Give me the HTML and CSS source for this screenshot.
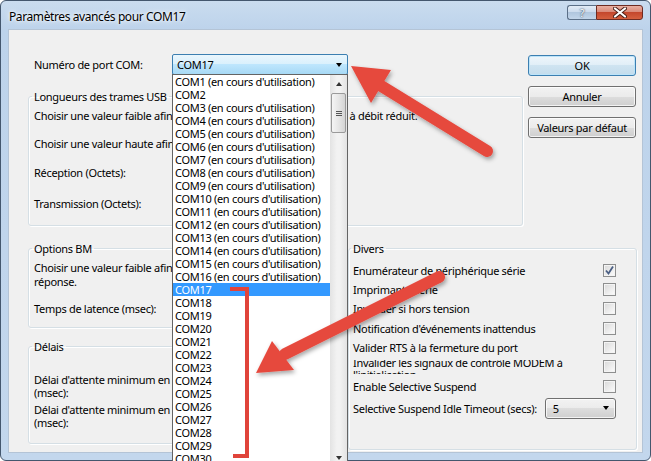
FILE: index.html
```html
<!DOCTYPE html>
<html>
<head>
<title>Paramètres avancés pour COM17</title>
<link rel="stylesheet" href="styles.css">
<meta name="viewport" content="width=device-width, initial-scale=1.0">
</head>
<body>
<div class="window">
  <div class="titlebar">
    <span class="title">Paramètres avancés pour COM17</span>
    <div class="caption">
      <span class="cap-help">?</span>
      <span class="cap-close">
        <svg width="14" height="11" viewBox="0 0 14 11"><path d="M2 1.5 L12 9.5 M12 1.5 L2 9.5" stroke="#4a1e17" stroke-width="4" stroke-linecap="round"/><path d="M2 1.5 L12 9.5 M12 1.5 L2 9.5" stroke="#fff" stroke-width="2.2" stroke-linecap="round"/></svg>
      </span>
    </div>
  </div>
  <div class="client">
    <div class="top">
      <div class="main">
        <div class="port-row">
          <span class="port-label">Numéro de port COM:</span>
          <div class="combo combo-port">
            <span>COM17</span>
            <span class="tri"></span>
            <div class="droplist">
              <div class="items">
                <div class="item">COM1 (en cours d'utilisation)</div>
                <div class="item">COM2</div>
                <div class="item">COM3 (en cours d'utilisation)</div>
                <div class="item">COM4 (en cours d'utilisation)</div>
                <div class="item">COM5 (en cours d'utilisation)</div>
                <div class="item">COM6 (en cours d'utilisation)</div>
                <div class="item">COM7 (en cours d'utilisation)</div>
                <div class="item">COM8 (en cours d'utilisation)</div>
                <div class="item">COM9 (en cours d'utilisation)</div>
                <div class="item">COM10 (en cours d'utilisation)</div>
                <div class="item">COM11 (en cours d'utilisation)</div>
                <div class="item">COM12 (en cours d'utilisation)</div>
                <div class="item">COM13 (en cours d'utilisation)</div>
                <div class="item">COM14 (en cours d'utilisation)</div>
                <div class="item">COM15 (en cours d'utilisation)</div>
                <div class="item">COM16 (en cours d'utilisation)</div>
                <div class="item selected">COM17</div>
                <div class="item">COM18</div>
                <div class="item">COM19</div>
                <div class="item">COM20</div>
                <div class="item">COM21</div>
                <div class="item">COM22</div>
                <div class="item">COM23</div>
                <div class="item">COM24</div>
                <div class="item">COM25</div>
                <div class="item">COM26</div>
                <div class="item">COM27</div>
                <div class="item">COM28</div>
                <div class="item">COM29</div>
                <div class="item">COM30</div>
                <div class="item">COM31</div>
              </div>
              <div class="vscroll">
                <div class="sb-btn"><span class="tri-up"></span></div>
                <div class="thumb"><span class="grip"></span></div>
                <div class="sb-track"></div>
                <div class="sb-btn"><span class="tri-down"></span></div>
              </div>
            </div>
          </div>
        </div>
        <fieldset class="group usb">
          <legend>Longueurs des trames USB</legend>
          <div class="line"><span class="covered">Choisir une valeur faible afin de corriger les problèmes de performance</span> à débit réduit.</div>
          <div class="line l2">Choisir une valeur haute afin d'améliorer les performances.</div>
          <div class="line l3">Réception (Octets):</div>
          <div class="line l4">Transmission (Octets):</div>
        </fieldset>
      </div>
      <div class="side">
        <div class="btn btn-default">OK</div>
        <div class="btn">Annuler</div>
        <div class="btn">Valeurs par défaut</div>
      </div>
    </div>
    <div class="bottom">
      <div class="left-col">
        <fieldset class="group bm">
          <legend>Options BM</legend>
          <div class="text2">Choisir une valeur faible afin de corriger les problèmes de temps de<br>réponse.</div>
          <div class="line latency">Temps de latence (msec):</div>
        </fieldset>
        <fieldset class="group delais">
          <legend>Délais</legend>
          <div class="text3">Délai d'attente minimum en lecture<br>(msec):</div>
          <div class="text3 second">Délai d'attente minimum en écriture<br>(msec):</div>
        </fieldset>
      </div>
      <fieldset class="group divers">
        <legend>Divers</legend>
        <div class="opt h20"><span>Enumérateur de périphérique série</span><span class="check checked"><svg width="11" height="11" viewBox="0 0 11 11"><path d="M2 5.5 L4.5 8.5 L9 1.5" fill="none" stroke="#4b5f84" stroke-width="1.8"/></svg></span></div>
        <div class="opt h19"><span>Imprimante série</span><span class="check"></span></div>
        <div class="opt h19"><span>Invalider si hors tension</span><span class="check"></span></div>
        <div class="opt h20"><span>Notification d'événements inattendus</span><span class="check"></span></div>
        <div class="opt h19"><span>Valider RTS à la fermeture du port</span><span class="check"></span></div>
        <div class="opt h19"><span class="clip"><span class="clip-in">Invalider les signaux de contrôle MODEM à<br>l'initialisation</span></span><span class="check"></span></div>
        <div class="opt h21"><span>Enable Selective Suspend</span><span class="check"></span></div>
        <div class="opt h22"><span class="timeout-label">Selective Suspend Idle Timeout (secs):</span><div class="combo combo-small"><span>5</span><span class="tri"></span></div></div>
      </fieldset>
    </div>
  </div>
</div>
<svg class="marks" width="651" height="461" viewBox="0 0 651 461">
  <defs>
    <filter id="sh" x="-20%" y="-20%" width="140%" height="140%">
      <feDropShadow dx="1.5" dy="2.5" stdDeviation="2" flood-color="#000" flood-opacity=".35"/>
    </filter>
  </defs>
  <g filter="url(#sh)" fill="#e6483d" stroke="#e6483d">
    <line x1="487" y1="151" x2="378" y2="84" stroke-width="12" stroke-linecap="round"/>
    <polygon points="351,66 391,70 371,103" stroke="none"/>
    <line x1="439" y1="277" x2="285" y2="354" stroke-width="12" stroke-linecap="round"/>
    <polygon points="256,373 272,341 294,370" stroke="none"/>
  </g>
  <path d="M230 289 H247 V456 H233" fill="none" stroke="#e0443a" stroke-width="4"/>
</svg>
</body>
</html>
```

FILE: styles.css
```css
* {
  box-sizing: border-box;
}
html, body {
  margin: 0;
  overflow: hidden;
}
body {
  width: 651px;
  height: 461px;
  font-family: "Noto Sans", "Segoe UI", sans-serif;
  font-size: 11px;
  letter-spacing: -0.3px;
  color: #000;
  background: #fff;
}
.window {
  position: relative;
  width: 651px;
  height: 461px;
  border: 1px solid #44576e;
  border-radius: 6px;
  background: linear-gradient(180deg, #cadcef 0, #bdd3eb 28px, #c3d7ed 100%);
}
.titlebar {
  position: relative;
  height: 28px;
  padding: 7px 0 0 8px;
}
.title {
  font-size: 12px;
  letter-spacing: -0.4px;
  text-shadow: 0 0 6px #fff, 0 0 3px #fff;
}
.caption {
  position: absolute;
  top: 4px;
  right: 7px;
  display: flex;
}
.cap-help {
  width: 29px;
  height: 15px;
  border: 1px solid #5b6f87;
  border-right: none;
  border-radius: 3px 0 0 3px;
  background: linear-gradient(#e3ecf6, #c9d9ec 50%, #b0c6de 50%, #c2d5ea);
  font-size: 11px;
  line-height: 13px;
  text-align: center;
  color: #fff;
  text-shadow: 0 0 2px #34475e, 0 0 1px #34475e;
}
.cap-close {
  display: flex;
  align-items: center;
  justify-content: center;
  width: 47px;
  height: 15px;
  border: 1px solid #6d2b22;
  border-radius: 0 3px 3px 0;
  background: linear-gradient(#eab0a2, #d98a79 45%, #c4472d 50%, #d5603f);
}
.client {
  margin: 0 7px;
  height: 424px;
  background: #f0f0f0;
  border: 1px solid #b4c4d6;
  padding: 24px 0 0 19px;
}
.top {
  display: flex;
}
.main {
  width: 495px;
}
.port-row {
  display: flex;
  height: 21px;
  margin-left: 6px;
}
.port-label {
  width: 138px;
  line-height: 21px;
}
.combo {
  position: relative;
  display: flex;
  align-items: center;
  justify-content: space-between;
  border-radius: 2px;
}
.combo-port {
  width: 176px;
  height: 21px;
  padding: 0 5px 0 4px;
  border: 1px solid #3c7fb1;
  background: linear-gradient(#eaf6fd, #d9f0fc 50%, #bee6fd 50%, #a7d9f5);
}
.tri {
  width: 0;
  height: 0;
  border-top: 4px solid #000;
  border-left: 3.5px solid transparent;
  border-right: 3.5px solid transparent;
}
.droplist {
  position: absolute;
  top: 19px;
  left: -1px;
  width: 176px;
  height: 393px;
  display: flex;
  border: 1px solid #646464;
  background: #fff;
  z-index: 5;
}
.items {
  flex: 1;
  overflow: hidden;
}
.item {
  height: 13px;
  line-height: 13px;
  padding-left: 2px;
  white-space: nowrap;
}
.item.selected {
  background: #3399ff;
  color: #fff;
}
.vscroll {
  width: 17px;
  display: flex;
  flex-direction: column;
  background: linear-gradient(90deg, #e3e3e3, #f2f2f2 40%, #f2f2f2 60%, #e3e3e3);
}
.sb-btn {
  height: 17px;
  display: flex;
  align-items: center;
  justify-content: center;
}
.tri-up {
  border-bottom: 4px solid #333;
  border-left: 3.5px solid transparent;
  border-right: 3.5px solid transparent;
}
.tri-down {
  border-top: 4px solid #333;
  border-left: 3.5px solid transparent;
  border-right: 3.5px solid transparent;
}
.thumb {
  margin: 1px 1px 0;
  height: 40px;
  border: 1px solid #9a9a9a;
  border-radius: 2px;
  background: linear-gradient(90deg, #f5f5f5, #e6e6e6 50%, #d4d4d4);
  display: flex;
  align-items: center;
  justify-content: center;
}
.grip {
  width: 6px;
  height: 5px;
  border-top: 1px solid #555;
  border-bottom: 1px solid #555;
  background: linear-gradient(#fff0 40%, #555 40%, #555 60%, #fff0 60%);
}
.sb-track {
  flex: 1;
}
.group {
  margin: 0;
  padding: 4px 5px 14px;
  min-width: 0;
  border: 1px solid #d5dfe5;
  border-radius: 3px;
  box-shadow: inset 1px 1px 0 #fff, 1px 1px 0 #fff;
}
.group legend {
  padding: 0 2px;
  margin-left: -2px;
  line-height: 15px;
}
.line {
  line-height: 15px;
  white-space: nowrap;
}
.usb {
  width: 495px;
  margin-top: 14px;
}
/* the middle of this label sits under the open drop-down */
.covered {
  display: inline-block;
  width: 313px;
  overflow: hidden;
  vertical-align: top;
}
.usb .l2 {
  margin-top: 13px;
}
.usb .l3 {
  margin-top: 14px;
}
.usb .l4 {
  margin-top: 16px;
}
.side {
  width: 108px;
  margin-left: 5px;
  padding-top: 1px;
  display: flex;
  flex-direction: column;
  gap: 10px;
}
.btn {
  height: 21px;
  border: 1px solid #707070;
  border-radius: 3px;
  background: linear-gradient(#f2f2f2, #ebebeb 50%, #dddddd 50%, #cfcfcf);
  box-shadow: inset 0 0 0 1px rgba(255, 255, 255, .75);
  text-align: center;
  line-height: 19px;
}
.btn-default {
  border-color: #3c7fb1;
  background: linear-gradient(#eef6fb, #e0eef7 50%, #cfe4f1 50%, #c3dcec);
  box-shadow: inset 0 0 0 1px #bde4f9;
}
.bottom {
  display: flex;
  margin-top: 15px;
}
.left-col {
  width: 312px;
}
.bm {
  padding: 5px 5px 11px;
}
.text2 {
  line-height: 14px;
  white-space: nowrap;
  overflow: hidden;
}
.latency {
  margin-top: 12px;
}
.delais {
  margin-top: 11px;
  padding: 19px 5px 14px;
}
.text3 {
  line-height: 13px;
  white-space: nowrap;
  overflow: hidden;
}
.text3.second {
  margin-top: 4px;
}
.divers {
  width: 289px;
  margin-left: 8px;
  padding: 4px 20px 30px 4px;
}
.opt {
  display: flex;
  align-items: center;
  justify-content: space-between;
  white-space: nowrap;
}
.h19 { height: 19px; }
.h20 { height: 20px; }
.h21 { height: 21px; }
.h22 { height: 22px; }
.check {
  display: flex;
  align-items: center;
  justify-content: center;
  width: 13px;
  height: 13px;
  border: 1px solid #8e8f8f;
  background: linear-gradient(135deg, #d8d8d8, #fdfdfd);
  box-shadow: inset 0 0 0 1px #f4f4f4;
}
.clip {
  height: 14px;
  overflow: hidden;
  line-height: 12px;
}
.clip-in {
  display: block;
  margin-top: -3px;
}
.timeout-label {
  width: 194px;
}
.combo-small {
  width: 72px;
  height: 21px;
  padding: 0 6px 0 7px;
  border: 1px solid #707070;
  border-radius: 3px;
  background: linear-gradient(#f2f2f2, #ebebeb 50%, #dddddd 50%, #cfcfcf);
  box-shadow: inset 0 0 0 1px rgba(255, 255, 255, .75);
}
.marks {
  position: absolute;
  top: 0;
  left: 0;
  z-index: 10;
  pointer-events: none;
}
```
